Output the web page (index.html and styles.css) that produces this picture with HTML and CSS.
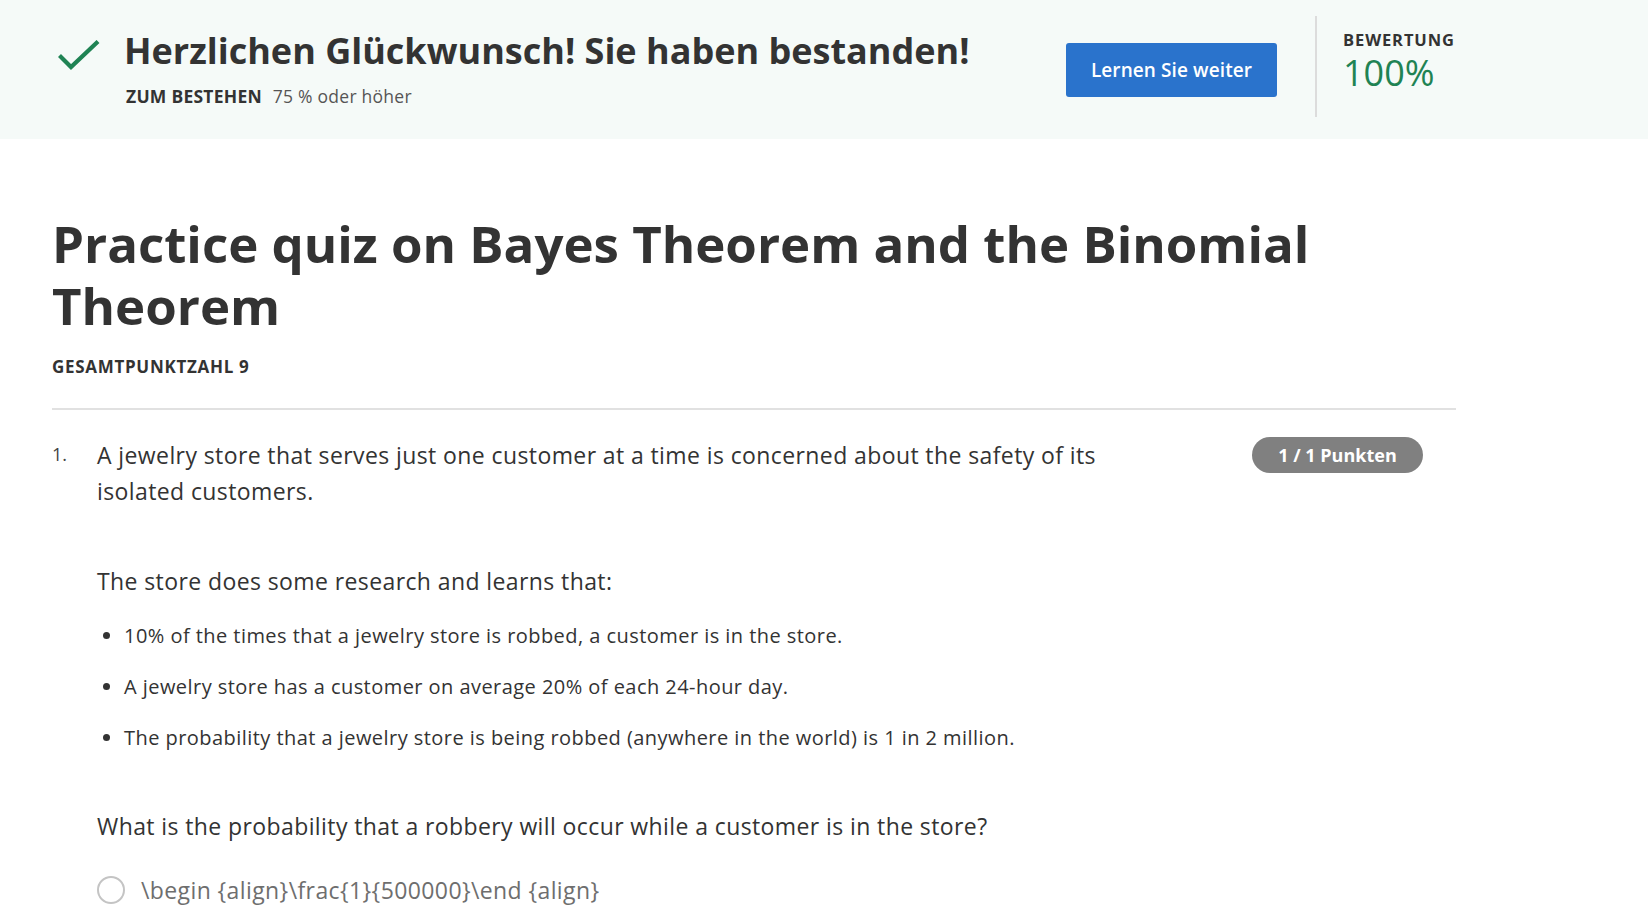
FILE: index.html
```html
<!DOCTYPE html>
<html lang="de">
<head>
<meta charset="utf-8">
<title>Practice quiz on Bayes Theorem and the Binomial Theorem</title>
<link rel="stylesheet" href="styles.css">
</head>
<body>
<header class="result">
  <div class="result-main">
    <svg class="check" width="42" height="30" viewBox="0 0 42 30" aria-hidden="true">
      <path d="M1.5 15.5 L13 27 L40 1.5" fill="none" stroke="#1f8354" stroke-width="4.2"/>
    </svg>
    <div class="result-text">
      <h2 class="result-title">Herzlichen Glückwunsch! Sie haben bestanden!</h2>
      <div class="result-sub"><span class="label">ZUM BESTEHEN</span> <span class="value">75 % oder höher</span></div>
    </div>
  </div>
  <button class="btn-primary">Lernen Sie weiter</button>
  <div class="vdivider"></div>
  <div class="score">
    <div class="score-label">BEWERTUNG</div>
    <div class="score-value">100%</div>
  </div>
</header>

<main class="content">
  <h1 class="quiz-title">Practice quiz on Bayes Theorem and the Binomial Theorem</h1>
  <div class="total">GESAMTPUNKTZAHL 9</div>
  <hr class="sep">

  <section class="question">
    <div class="qnum">1.</div>
    <div class="qbody">
      <p class="qtext">A jewelry store that serves just one customer at a time is concerned about the safety of its isolated customers.</p>
      <p class="qtext second">The store does some research and learns that:</p>
      <ul class="facts">
        <li>10% of the times that a jewelry store is robbed, a customer is in the store.</li>
        <li>A jewelry store has a customer on average 20% of each 24-hour day.</li>
        <li>The probability that a jewelry store is being robbed (anywhere in the world) is 1 in 2 million.</li>
      </ul>
      <p class="qtext ask">What is the probability that a robbery will occur while a customer is in the store?</p>
      <label class="option"><span class="radio"></span><span class="opt-text">\begin {align}\frac{1}{500000}\end {align}</span></label>
    </div>
    <div class="badge">1 / 1 Punkten</div>
  </section>
</main>
</body>
</html>
```

FILE: styles.css
```css
* { box-sizing: border-box; }

body {
  margin: 0;
  font-family: "Open Sans", "Noto Sans", sans-serif;
  color: #333;
  background: #fff;
  overflow: hidden;
}

.result {
  display: flex;
  align-items: flex-start;
  height: 139px;
  padding-left: 58px;
  background: #f5faf8;
}

.result-main {
  display: flex;
  align-items: flex-start;
  width: 1008px;
  margin-top: 29px;
}

.check {
  display: block;
  margin-top: 11px;
  margin-right: 24px;
  flex: none;
}

.result-title {
  margin: 0;
  font-size: 36px;
  line-height: 44px;
  font-weight: 700;
  color: #333;
}

.result-sub {
  margin-top: 11px;
  padding-left: 2px;
  font-size: 17.5px;
  line-height: 24px;
  letter-spacing: 0.25px;
}

.result-sub .label {
  font-weight: 700;
  margin-right: 6px;
}

.result-sub .value {
  color: #555;
}

.btn-primary {
  margin-top: 43px;
  width: 211px;
  height: 54px;
  border: 0;
  border-radius: 3px;
  background: #2a73cc;
  color: #fff;
  font-family: inherit;
  font-size: 19px;
  font-weight: 600;
  letter-spacing: 0.1px;
  flex: none;
}

.vdivider {
  margin: 16px 26px 0 38px;
  width: 2px;
  height: 101px;
  background: #dcdcdc;
  flex: none;
}

.score {
  margin-top: 30px;
}

.score-label {
  font-size: 16.5px;
  line-height: 20px;
  font-weight: 700;
  letter-spacing: 0.9px;
}

.score-value {
  margin-top: 3px;
  font-size: 36px;
  line-height: 40px;
  font-weight: 400;
  color: #1f8354;
}

.content {
  width: 1404px;
  margin-left: 52px;
}

.quiz-title {
  margin: 73px 0 0;
  font-size: 51px;
  line-height: 62px;
  font-weight: 700;
  color: #333;
}

.total {
  margin-top: 19px;
  font-size: 17px;
  line-height: 24px;
  font-weight: 700;
  letter-spacing: 0.7px;
}

.sep {
  margin: 29px 0 0;
  border: 0;
  height: 2px;
  background: #e1e1e1;
}

.question {
  display: flex;
  align-items: flex-start;
  padding-top: 27px;
}

.qnum {
  width: 45px;
  flex: none;
  font-size: 18px;
  line-height: 34px;
  color: #444;
}

.qbody {
  width: 1060px;
  flex: none;
}

.qtext {
  margin: 0;
  font-size: 23px;
  line-height: 36px;
  letter-spacing: 0.4px;
  color: #333;
}

.qtext.second {
  margin-top: 54px;
}

.facts {
  margin: 21px 0 0;
  padding-left: 27px;
  font-size: 20px;
  line-height: 31px;
  letter-spacing: 0.45px;
  color: #333;
}

.facts li {
  margin-bottom: 20px;
}

.facts li:last-child {
  margin-bottom: 0;
}

.qtext.ask {
  margin-top: 55px;
}

.option {
  display: flex;
  align-items: center;
  margin-top: 30px;
}

.radio {
  width: 28px;
  height: 28px;
  border: 2.5px solid #c4c4c4;
  border-radius: 50%;
  margin-right: 16px;
  flex: none;
}

.opt-text {
  font-size: 23px;
  line-height: 32px;
  letter-spacing: 0.4px;
  color: #6e6e6e;
}

.badge {
  margin-left: auto;
  margin-right: 33px;
  margin-top: 0;
  width: 171px;
  height: 36px;
  border-radius: 18px;
  background: #808080;
  color: #fff;
  font-size: 18px;
  font-weight: 700;
  line-height: 36px;
  text-align: center;
  flex: none;
}
```
